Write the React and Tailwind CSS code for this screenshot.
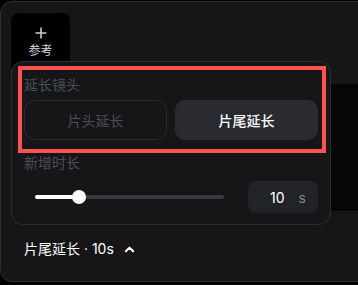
import React from "react";

const font = { fontFamily: '"Inter", "Noto Sans CJK SC", "Noto Sans", sans-serif' };

export default function App() {
  return (
    <div className="w-[358px] h-[285px] overflow-hidden bg-black pt-px" style={font}>
      <div className="relative w-[380px] h-[281px] bg-[#161618] border border-[#2e2f32] rounded-l-[12px] px-[10px] pt-[11px] flex flex-col">
        <div className="w-[59px] h-[60px] bg-black rounded-[8px] flex flex-col items-center pt-[14px]">
          <svg width="12" height="12" viewBox="0 0 12 12" className="text-[#c9ccd2]">
            <path d="M6 0.5V11.5M0.5 6H11.5" stroke="currentColor" strokeWidth="1.6" />
          </svg>
          <span className="text-[12px] leading-[16px] mt-[4px] text-[#d6dae0]">参考</span>
        </div>
        <div className="ml-auto mt-[11px] w-[160px] h-[127px] bg-[#060606]" />
        <div className="mt-[28px] ml-[13px] flex items-center text-[14px] leading-[20px] text-white">
          <span>片尾延长 · 10s</span>
          <svg width="11" height="11" viewBox="0 0 12 12" className="ml-[10px]">
            <path d="M2 8L6 4L10 8" fill="none" stroke="white" strokeWidth="2.2" strokeLinecap="round" strokeLinejoin="round" />
          </svg>
        </div>

        <div className="absolute left-[10px] top-[59px] w-[320px] h-[164px] bg-[#161618] border border-[#2c2d30] rounded-[12px] px-[12px] pt-[13px]">
          <div className="absolute left-[6px] top-[4px] w-[308px] h-[87px] border-[4px] border-[#ff5252] pointer-events-none" />
          <div className="text-[14px] leading-[20px] text-[#4a505a]">延长镜头</div>
          <div className="grid grid-cols-2 gap-2 mt-[5px]">
            <div className="h-[40px] rounded-[10px] border border-[#2a2b2f] flex items-center justify-center text-[14px] text-[#4a505a]">
              片头延长
            </div>
            <div className="h-[40px] rounded-[10px] bg-[#2a2b30] flex items-center justify-center text-[14px] text-white font-medium">
              片尾延长
            </div>
          </div>
          <div className="mt-[13px] text-[14px] leading-[20px] text-[#4a505a]">新增时长</div>
          <div className="mt-[8px] flex items-center">
            <div className="flex-1 pl-[11px] pr-[24px]">
              <div className="relative h-[4px] rounded-full bg-[#38393c]">
                <div className="absolute left-0 top-0 h-[4px] w-[44px] rounded-full bg-white" />
                <div className="absolute left-[37px] top-[-5px] w-[14px] h-[14px] rounded-full bg-white" />
              </div>
            </div>
            <div className="w-[70px] h-[32px] rounded-[8px] bg-[#222326] flex items-center justify-end pr-[12px] text-[14px]">
              <span className="text-white">10</span>
              <span className="ml-[14px] text-[#7d8797]">s</span>
            </div>
          </div>
        </div>
      </div>
    </div>
  );
}
